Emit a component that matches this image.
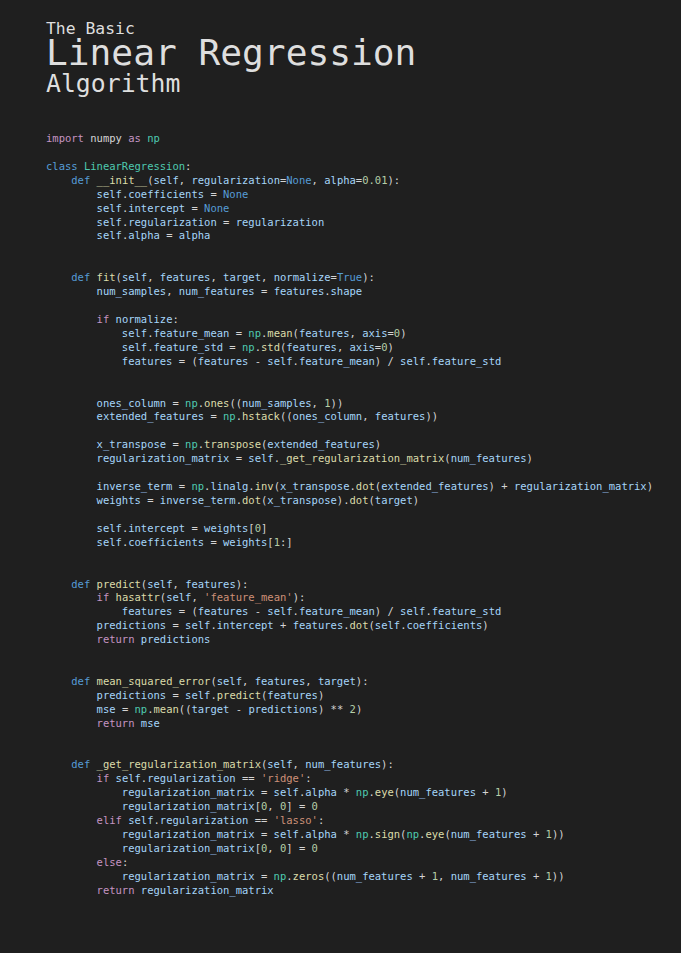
import { Fragment } from 'react'

const SOURCE = `import numpy as np

class LinearRegression:
    def __init__(self, regularization=None, alpha=0.01):
        self.coefficients = None
        self.intercept = None
        self.regularization = regularization
        self.alpha = alpha


    def fit(self, features, target, normalize=True):
        num_samples, num_features = features.shape

        if normalize:
            self.feature_mean = np.mean(features, axis=0)
            self.feature_std = np.std(features, axis=0)
            features = (features - self.feature_mean) / self.feature_std


        ones_column = np.ones((num_samples, 1))
        extended_features = np.hstack((ones_column, features))

        x_transpose = np.transpose(extended_features)
        regularization_matrix = self._get_regularization_matrix(num_features)

        inverse_term = np.linalg.inv(x_transpose.dot(extended_features) + regularization_matrix)
        weights = inverse_term.dot(x_transpose).dot(target)

        self.intercept = weights[0]
        self.coefficients = weights[1:]


    def predict(self, features):
        if hasattr(self, 'feature_mean'):
            features = (features - self.feature_mean) / self.feature_std
        predictions = self.intercept + features.dot(self.coefficients)
        return predictions


    def mean_squared_error(self, features, target):
        predictions = self.predict(features)
        mse = np.mean((target - predictions) ** 2)
        return mse


    def _get_regularization_matrix(self, num_features):
        if self.regularization == 'ridge':
            regularization_matrix = self.alpha * np.eye(num_features + 1)
            regularization_matrix[0, 0] = 0
        elif self.regularization == 'lasso':
            regularization_matrix = self.alpha * np.sign(np.eye(num_features + 1))
            regularization_matrix[0, 0] = 0
        else:
            regularization_matrix = np.zeros((num_features + 1, num_features + 1))
        return regularization_matrix`

type Kind = 'ctrl' | 'decl' | 'type' | 'func' | 'num' | 'str' | 'var' | 'plain' | 'space'

const COLORS: Record<Kind, string> = {
  ctrl: 'text-[#c594c2]',
  decl: 'text-[#569cd6]',
  type: 'text-[#4ec9b0]',
  func: 'text-[#dcdcaa]',
  num: 'text-[#b5cea8]',
  str: 'text-[#ce9178]',
  var: 'text-[#a6d6fa]',
  plain: 'text-[#d4d4d4]',
  space: '',
}

const CTRL = new Set(['import', 'as', 'if', 'elif', 'else', 'return'])
const DECL = new Set(['class', 'def', 'None', 'True'])

function tokenize(line: string): { text: string; kind: Kind }[] {
  const out: { text: string; kind: Kind }[] = []
  const re = /(\s+)|('[^']*')|(\d+(?:\.\d+)?)|([A-Za-z_]\w*)|(\*\*|==|[^\s\w])/g
  let m: RegExpExecArray | null
  let prevWord = ''
  while ((m = re.exec(line))) {
    const [tok, ws, str, num, word] = m
    if (ws) {
      out.push({ text: tok, kind: 'space' })
      continue
    }
    if (str) out.push({ text: tok, kind: 'str' })
    else if (num) out.push({ text: tok, kind: 'num' })
    else if (word) {
      const next = line.slice(re.lastIndex).trimStart()[0]
      let kind: Kind = 'var'
      if (CTRL.has(word)) kind = 'ctrl'
      else if (DECL.has(word)) kind = 'decl'
      else if (prevWord === 'class' || word === 'np') kind = 'type'
      else if (prevWord === 'def' || next === '(') kind = 'func'
      else if (word === 'numpy') kind = 'plain'
      out.push({ text: tok, kind })
      prevWord = word
      continue
    } else out.push({ text: tok, kind: 'plain' })
    prevWord = ''
  }
  return out
}

function CodeBlock({ source }: { source: string }) {
  return (
    <div className="mt-[32px] font-['DejaVu_Sans_Mono',monospace] text-[10.5px] leading-[13.93px]">
      {source.split('\n').map((line, i) => (
        <div key={i} className="h-[13.93px] whitespace-pre">
          {tokenize(line).map((t, j) => (
            <Fragment key={j}>
              {t.kind === 'space' ? t.text : <span className={COLORS[t.kind]}>{t.text}</span>}
            </Fragment>
          ))}
        </div>
      ))}
    </div>
  )
}

export default function App() {
  return (
    <div className="min-h-screen bg-[#1f1f1f] pl-[46px] pt-[20px] text-[#dedede]">
      <div className="font-['DejaVu_Sans_Mono',monospace]">
        <div className="text-[16.4px] leading-[18px]">The Basic</div>
        <div className="text-[36.2px] leading-[30px]">Linear Regression</div>
        <div className="text-[24.8px] leading-[32px]">Algorithm</div>
      </div>
      <CodeBlock source={SOURCE} />
    </div>
  )
}
